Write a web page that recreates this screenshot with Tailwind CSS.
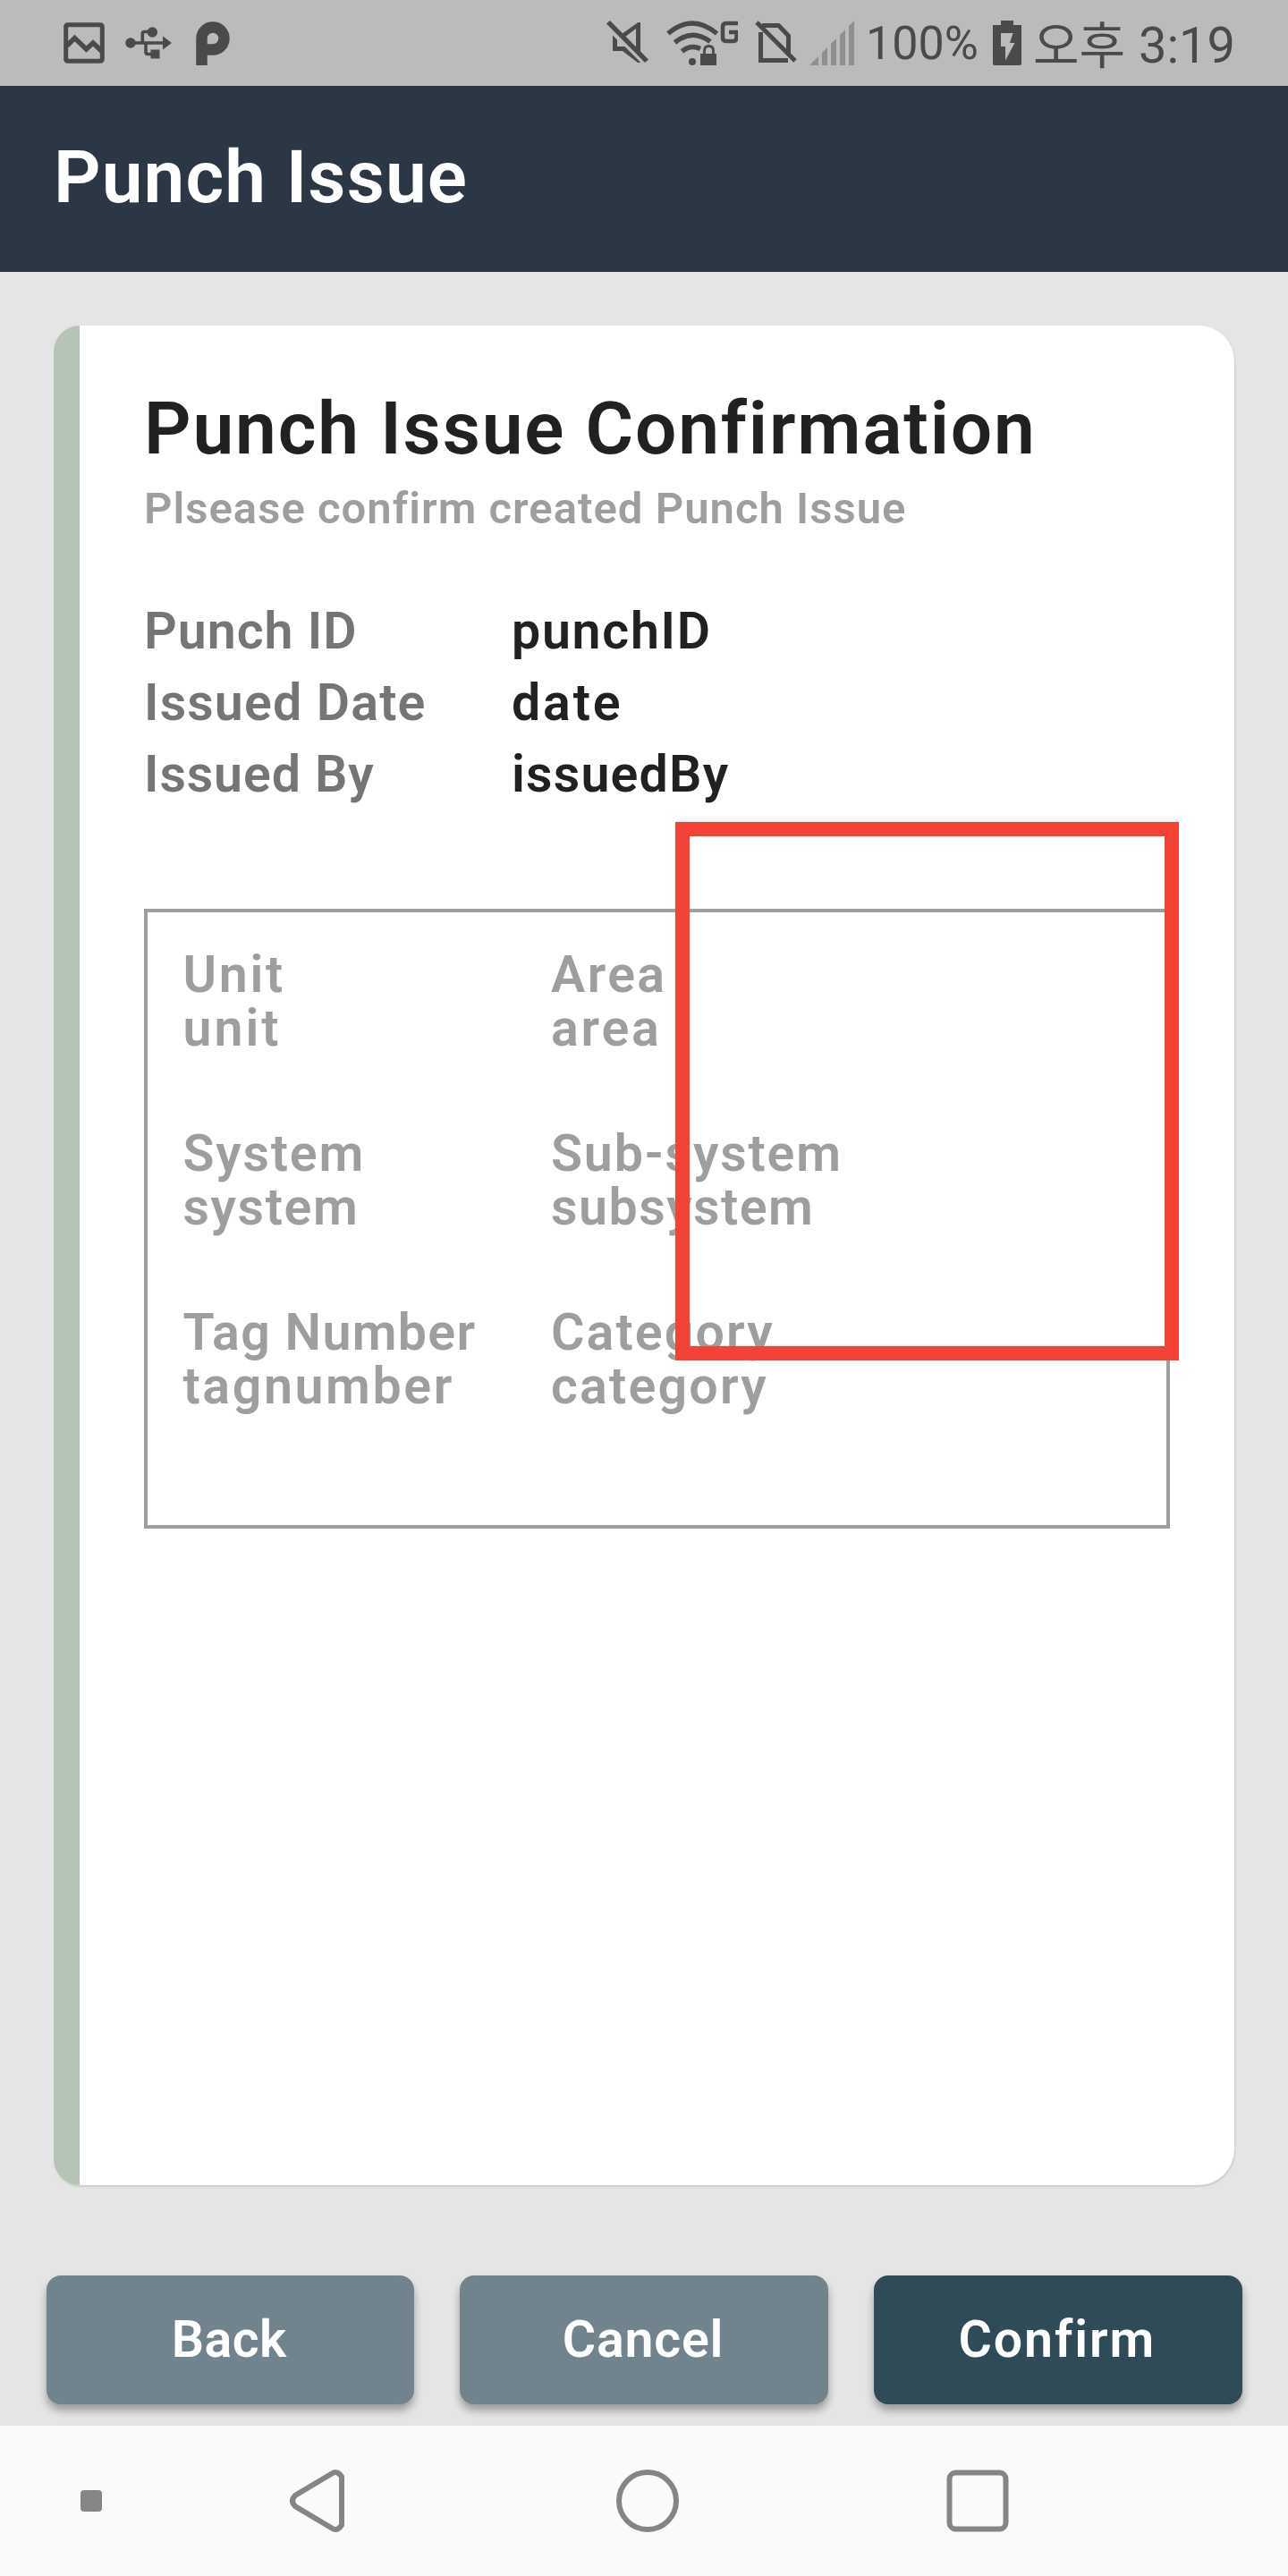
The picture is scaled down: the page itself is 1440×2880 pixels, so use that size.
<!DOCTYPE html>
<html lang="ko">
<head>
<meta charset="utf-8">
<title>Punch Issue</title>
<script src="https://cdn.jsdelivr.net/npm/@tailwindcss/browser@4"></script>
</head>
<body class="bg-[#e5e5e5] font-['Roboto','Noto_Sans_CJK_KR',sans-serif]">
<div class="flex h-[2880px] w-[1440px] flex-col overflow-hidden font-semibold">
  <!-- Status bar -->
  <div class="flex h-24 shrink-0 items-center bg-[#bbbbbb] pl-[71px] text-[#4a4a4a]">
    <svg class="h-24 w-[46px] shrink-0" viewBox="71 0 46 96" fill="none" stroke="currentColor" stroke-width="5"><rect x="73.700" y="27.700" width="40.600" height="40.600" rx="2"/><path d="M75 51l8.500-8.500L96.500 55l7.500-7 10 9.500" stroke-width="5.500"/></svg>
    <svg class="ml-[23px] h-24 w-[52px] shrink-0" viewBox="140 0 52 96" fill="currentColor"><circle cx="146" cy="48" r="5.800"/><circle cx="170.300" cy="36" r="5.800"/><rect x="168.500" y="55.500" width="10" height="10"/><path d="M182 40.500v15L192 48z"/><path d="M148 48h36M159.300 48V38q0-2.500 2.500-2.500H170M163 48v10q0 2.500 2.500 2.500h5" fill="none" stroke="currentColor" stroke-width="3.600"/></svg>
    <svg class="ml-[27px] h-24 w-[38px] shrink-0" viewBox="219 0 38 96" fill="none" stroke="currentColor" stroke-width="12.500"><path d="M225.500 73V43a12.500 12.500 0 1 1 12.500 12.500H228"/></svg>
    <svg class="ml-[421px] h-24 w-[47px] shrink-0" viewBox="678 0 47 96" fill="currentColor"><path d="M682 23l-4 3.500 43 43.500 4-3.500z"/><path d="M716 61V25h-2.500L695 38l3.500 3.500 12.500-9.500v24z"/><path d="M685 39.500V57h11l17 13h2.500v-1l-17-17H690v-7.500z"/></svg>
    <svg class="ml-5 h-24 w-20 shrink-0" viewBox="745 0 80 96" fill="none" stroke="currentColor" stroke-width="5.500"><path d="M747 37.500Q774 14.500 801.500 37.500M754.500 47.500Q774 31.500 794 46.500M762.500 57.500Q772 49.500 783 54.500"/><circle cx="774" cy="69" r="4" fill="currentColor" stroke="none"/><rect x="783" y="60" width="18" height="13" fill="currentColor" stroke="none"/><path d="M787.500 61v-4q0-5.500 5-5.500t5 5.500v4" stroke-width="2.800"/><path d="M825 26H812q-4 0-4 4v12q0 4 4 4h7.500q4 0 4-4v-6H815" stroke-width="4.500"/></svg>
    <svg class="ml-[19px] h-24 w-[47px] shrink-0" viewBox="844 0 47 96" fill="none" stroke="currentColor" stroke-width="5"><path d="M846 25l43 43M850.500 36v31.500H881M852 28.500h18.500l11 11.500v20"/></svg>
    <svg class="ml-3.5 h-24 w-[51px] shrink-0" viewBox="905 0 51 96" fill="#8f8f8f"><path d="M905 73l10-10v10zM919 59l6-6v20h-6zM929 49l6-6v30h-6zM939 39l6-6v40h-6zM949 29l6-6v50h-6z"/></svg>
    <span class="ml-3 w-[128px] pt-0.5 text-[52px] leading-[94px] font-normal">100%</span>
    <svg class="ml-[14px] h-24 w-8 shrink-0" viewBox="1110 0 32 96" fill="currentColor"><path fill-rule="evenodd" d="M1119 23h14v5h9v43q0 2-2 2h-28q-2 0-2-2V28h9zM1119 37v15h5v15.500l10.500-19.500H1129l3.500-11z"/></svg>
    <span class="ml-[13px] w-[118px] pb-0.5 font-['Noto_Sans_CJK_KR',sans-serif] text-[56px] leading-[94px] font-normal whitespace-nowrap">오후</span>
    <span class="pt-[6px] text-[56px] leading-[90px] font-normal">3:19</span>
  </div>
  <!-- App bar -->
  <header class="flex h-52 shrink-0 items-center bg-[#2c3745] pb-[3px] pl-[60px] text-[82px] text-white">
    <h1 class="font-semibold tracking-[1.100px]">Punch Issue</h1>
  </header>
  <!-- Card -->
  <main class="relative mx-[60px] mt-[60px] h-[2079px] shrink-0 rounded-l-[29px] rounded-r-[40px] border-l-[29px] border-[#b6c4b8] bg-white pl-[72px] pr-[72px] pt-[67px] shadow-[1px_2px_2px_rgba(150,170,155,0.35)]">
    <h2 class="text-[82px] leading-24 tracking-[1.850px] text-[#212121] whitespace-nowrap">Punch Issue Confirmation</h2>
    <p class="mt-3 text-[49px] leading-[60px] tracking-[1.030px] text-[#9e9e9e] whitespace-nowrap">Plsease confirm created Punch Issue</p>
    <dl class="mt-[67px] grid grid-cols-[411px_1fr] text-[57.300px] leading-20 text-[#757575]">
      <dt class="tracking-[1px]">Punch ID</dt><dd class="tracking-[1.700px] text-[#212121]">punchID</dd>
      <dt class="tracking-[1.150px]">Issued Date</dt><dd class="tracking-[2.800px] text-[#212121]">date</dd>
      <dt class="tracking-[0.900px]">Issued By</dt><dd class="tracking-[1.200px] text-[#212121]">issuedBy</dd>
    </dl>
    <section class="mt-[110px] grid h-[693px] grid-cols-[411.500px_1fr] grid-rows-[repeat(3,120px)] gap-y-20 border-4 border-[#9e9e9e] pl-[39.500px] pt-10 text-[57.300px] leading-[60px] text-[#9e9e9e]">
      <div><p class="tracking-[2.700px]">Unit</p><p class="tracking-[3px]">unit</p></div>
      <div><p class="tracking-[2.400px]">Area</p><p class="tracking-[2.800px]">area</p></div>
      <div><p class="tracking-[1.800px]">System</p><p class="tracking-[1.600px]">system</p></div>
      <div><p class="tracking-[1.850px]">Sub-system</p><p class="tracking-[1.500px]">subsystem</p></div>
      <div><p class="tracking-[1.300px]">Tag Number</p><p class="tracking-[2.600px]">tagnumber</p></div>
      <div><p class="tracking-[2.100px]">Category</p><p class="tracking-[2.200px]">category</p></div>
    </section>
    <!-- Overlay frame -->
    <div class="absolute top-[555px] left-[666px] h-[602px] w-[563px] border-16 border-[#f44336]"></div>
  </main>
  <!-- Actions -->
  <div class="mt-[101px] grid h-36 shrink-0 grid-cols-3 gap-[51.500px] px-[51.500px] text-[57.300px] text-white">
    <button class="rounded-2xl bg-[#71838c] pr-0.5 font-semibold tracking-[0.400px] shadow-[0_7px_10px_rgba(0,0,0,0.32)]">Back</button>
    <button class="rounded-2xl bg-[#71838c] pr-0.5 font-semibold tracking-[0.800px] shadow-[0_7px_10px_rgba(0,0,0,0.32)]">Cancel</button>
    <button class="rounded-2xl bg-[#2f4b58] pr-0.5 font-semibold tracking-[1.900px] shadow-[0_7px_10px_rgba(0,0,0,0.32)]">Confirm</button>
  </div>
  <!-- Navigation bar -->
  <nav class="relative mt-6 flex h-42 shrink-0 items-center bg-[#fafafa] pl-[90px] text-[#858585]">
    <span class="size-6 rounded-[4px] bg-[#858585]"></span>
    <svg class="ml-[208px] h-[72px] w-[66px]" viewBox="322 2760 66 72" fill="none" stroke="currentColor" stroke-width="6"><path d="M371 2765.500L330 2790q-6 6 0 12l41 24.500q6 4 11-3.500V2769q-5-7.500-11-3.500z"/></svg>
    <svg class="ml-[300px] size-[72px]" viewBox="0 0 72 72" fill="none" stroke="currentColor" stroke-width="6"><circle cx="36" cy="36" r="32"/></svg>
    <svg class="ml-[297px] size-[72px]" viewBox="0 0 72 72" fill="none" stroke="currentColor" stroke-width="6"><rect x="4.500" y="4.500" width="63" height="63" rx="7"/></svg>
  </nav>
</div>
</body>
</html>
